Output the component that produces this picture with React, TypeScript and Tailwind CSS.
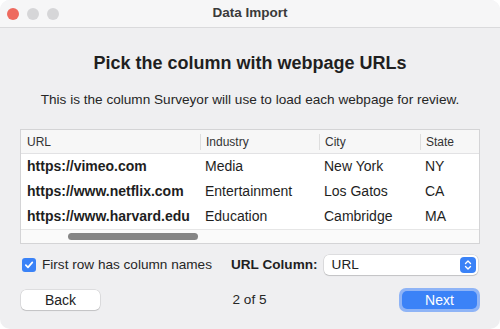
import React from 'react';

const rows = [
  { url: 'https://vimeo.com', industry: 'Media', city: 'New York', state: 'NY' },
  { url: 'https://www.netflix.com', industry: 'Entertainment', city: 'Los Gatos', state: 'CA' },
  { url: 'https://www.harvard.edu', industry: 'Education', city: 'Cambridge', state: 'MA' },
];

const font = { fontFamily: '"Liberation Sans", Arial, sans-serif' };

export default function App() {
  return (
    <div className="w-[500px] h-[329px] bg-white overflow-hidden" style={font}>
      <div className="w-full h-full rounded-[10px] bg-[#efeff1] flex flex-col overflow-hidden text-[#222]">
        {/* title bar */}
        <div className="relative h-[28px] shrink-0 bg-[#f6f6f7] border-b border-[#dadadc] flex items-center justify-center">
          <div className="absolute left-[7px] top-[8px] flex gap-[8px]">
            <span className="w-[12px] h-[12px] rounded-full bg-[#ee6a5f]" />
            <span className="w-[12px] h-[12px] rounded-full bg-[#d6d6d8]" />
            <span className="w-[12px] h-[12px] rounded-full bg-[#d6d6d8]" />
          </div>
          <span className="text-[13.5px] font-bold text-[#3a3a3a]">Data Import</span>
        </div>

        <h1 className="mt-[24px] text-center text-[18px] font-bold leading-[22px] text-[#1f1f1f]">
          Pick the column with webpage URLs
        </h1>
        <p className="mt-[18px] text-center text-[13.6px] leading-[16px] text-[#262626]">
          This is the column Surveyor will use to load each webpage for review.
        </p>

        {/* table */}
        <div className="mx-[20px] mt-[21px] border border-[#d4d4d6] bg-white overflow-hidden">
          <div className="flex h-[24px] bg-[#f7f7f7] border-b border-[#e2e2e4] text-[12px] text-[#333] items-center">
            <div className="w-[179px] pl-[6px]">URL</div>
            <div className="w-[119px] pl-[5px] border-l border-[#dedede] h-[16px] flex items-center">Industry</div>
            <div className="w-[101px] pl-[5px] border-l border-[#dedede] h-[16px] flex items-center">City</div>
            <div className="flex-1 pl-[5px] border-l border-[#dedede] h-[16px] flex items-center">State</div>
          </div>
          {rows.map((r) => (
            <div key={r.url} className="flex h-[25px] items-center text-[14px] text-[#1e1e1e]">
              <div className="w-[179px] pl-[6px] font-bold">{r.url}</div>
              <div className="w-[119px] pl-[5px]">{r.industry}</div>
              <div className="w-[101px] pl-[5px]">{r.city}</div>
              <div className="flex-1 pl-[5px]">{r.state}</div>
            </div>
          ))}
          <div className="h-[14px] border-t border-[#e6e6e6] bg-[#fafafa] flex items-center">
            <div className="ml-[47px] w-[130px] h-[7px] rounded-full bg-[#858585]" />
          </div>
        </div>

        {/* options */}
        <div className="mt-[11px] flex items-center h-[20px] px-[22px] text-[13.6px]">
          <span className="w-[14px] h-[14px] rounded-[3px] bg-[#3a82f7] flex items-center justify-center">
            <svg width="10" height="10" viewBox="0 0 10 10">
              <path d="M1.8 5.2 L4 7.4 L8.3 2.4" fill="none" stroke="white" strokeWidth="1.7" strokeLinecap="round" strokeLinejoin="round" />
            </svg>
          </span>
          <span className="ml-[6px] text-[#262626]">First row has column names</span>
          <span className="ml-[19px] font-bold text-[#1f1f1f]">URL Column:</span>
          <div className="ml-[6px] flex-1 h-[20px] rounded-[5px] bg-white shadow-[0_0_0_0.5px_rgba(0,0,0,0.15),0_1px_1px_rgba(0,0,0,0.12)] flex items-center justify-between pl-[8px] pr-[2px]">
            <span className="text-[#222]">URL</span>
            <span className="w-[16px] h-[16px] rounded-[4px] bg-[#3a82f7] flex items-center justify-center">
              <svg width="10" height="12" viewBox="0 0 10 12">
                <path d="M2.5 4.5 L5 2 L7.5 4.5 M2.5 7.5 L5 10 L7.5 7.5" fill="none" stroke="white" strokeWidth="1.4" strokeLinecap="round" strokeLinejoin="round" />
              </svg>
            </span>
          </div>
        </div>

        {/* footer */}
        <div className="mt-[13px] flex items-center justify-between px-[20px] h-[24px]">
          <button className="w-[79px] h-[20px] ml-[1px] rounded-[5px] bg-white text-[14px] text-[#222] shadow-[0_0_0_0.5px_rgba(0,0,0,0.15),0_1px_1px_rgba(0,0,0,0.12)]">
            Back
          </button>
          <span className="text-[13.6px] text-[#262626]">2 of 5</span>
          <button className="w-[81px] h-[24px] rounded-[7px] bg-[#8fb4f6] p-[3px]">
            <span className="block w-full h-full rounded-[5px] bg-[#3b82f7] text-white text-[14px] leading-[18px]">Next</span>
          </button>
        </div>
      </div>
    </div>
  );
}
